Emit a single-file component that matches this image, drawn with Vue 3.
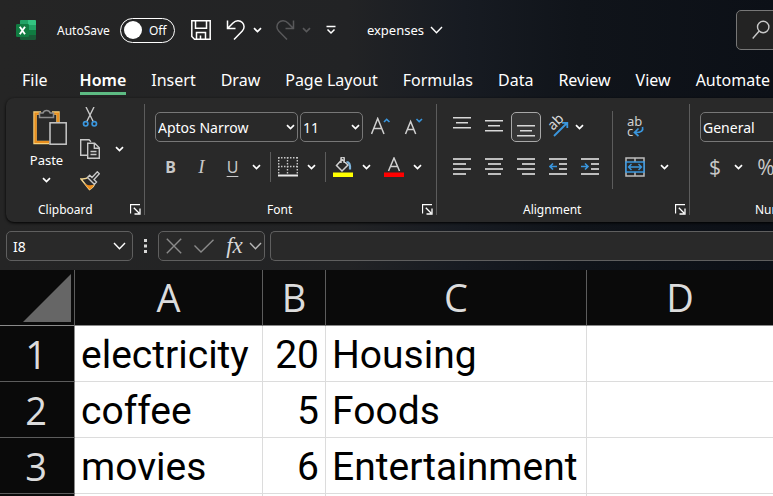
<script setup>
import { h, ref } from 'vue'

const Caret = () =>
  h('svg', { class: 'caret', width: 9, height: 6, viewBox: '0 0 9 6', fill: 'none', 'aria-hidden': 'true' }, [
    h('path', { d: 'M1 1.2 4.5 4.6 8 1.2', stroke: 'currentColor', 'stroke-width': 1.7 }),
  ])

const Chevron = () =>
  h('svg', { class: 'chevron', width: 13, height: 8, viewBox: '0 0 13 8', fill: 'none', 'aria-hidden': 'true' }, [
    h('path', { d: 'M1 1 6.500 6.800 12 1', stroke: 'currentColor', 'stroke-width': 1.4 }),
  ])

const Launcher = () =>
  h('svg', { width: 11, height: 11, viewBox: '0 0 11 11', fill: 'none', stroke: 'currentColor', 'aria-hidden': 'true' }, [
    h('path', { d: 'M.5 9.5V.5h9.5M3.8 3.8 9 9M4.5 10h5.5V4.5', 'stroke-width': 1.3 }),
  ])

const tabs = ['Home', 'Insert', 'Draw', 'Page Layout', 'Formulas', 'Data', 'Review', 'View', 'Automate']
const activeTab = ref('Home')
const autoSave = ref(false)
const cellName = ref('I8')
const formula = ref('')

const lines = {
  top: [[0, 1, 18], [3, 6, 12], [0, 11, 18]],
  middle: [[0, 4, 18], [3, 9, 12], [0, 14, 18]],
  bottom: [[0, 9, 18], [3, 14, 12], [0, 19, 18]],
  left: [[0, 1, 18], [0, 6, 13], [0, 11, 18], [0, 16, 13]],
  center: [[0, 1, 18], [3, 6, 13], [0, 11, 18], [3, 16, 13]],
  right: [[0, 1, 18], [5, 6, 13], [0, 11, 18], [5, 16, 13]],
}

const columns = ['A', 'B', 'C', 'D']
const rows = [
  ['electricity', 20, 'Housing', ''],
  ['coffee', 5, 'Foods', ''],
  ['movies', 6, 'Entertainment', ''],
]
</script>

<template>
  <div class="window">
    <header class="titlebar">
      <svg class="logo" width="20" height="20" viewBox="0 0 20 20" aria-hidden="true">
        <rect x="4" width="16" height="20" rx="1.2" fill="#185c37" />
        <path d="M5 0h7v5H4V1a1 1 0 0 1 1-1z" fill="#21a366" />
        <path d="M12 0h7a1 1 0 0 1 1 1v4h-8z" fill="#33c481" />
        <path d="M4 5h8v5H4z" fill="#107c41" />
        <path d="M12 5h8v5h-8z" fill="#21a366" />
        <path d="M12 10h8v5h-8z" fill="#107c41" />
        <rect y="4" width="13" height="13" rx="1.2" fill="#107c41" />
        <path d="M3.8 6.8 9 14.2M9 6.8 3.8 14.2" stroke="#fff" stroke-width="1.9" />
      </svg>

      <label class="autosave">
        <span>AutoSave</span>
        <input v-model="autoSave" type="checkbox" role="switch" class="hidden-input" />
        <span class="switch"><i class="knob"></i><span>{{ autoSave ? 'On' : 'Off' }}</span></span>
      </label>

      <div class="quick">
        <button aria-label="Save">
          <svg width="20" height="20" viewBox="0 0 20 20" fill="none" stroke="currentColor" stroke-width="1.5">
            <path d="M.8.8h18.4v18.4H3.5L.8 16.5zM4.5 1v7.2h11V1M5.500 19v-6.500h9V19M9.500 15.500v3.500" />
          </svg>
        </button>
        <button class="undo" aria-label="Undo">
          <svg width="20" height="20" viewBox="0 0 20 20" fill="none" stroke="currentColor" stroke-width="1.5">
            <path d="M1.500.5v8h8M1.800 8.200 7 3C9.800.2 14 .2 16.300 2.600c2.400 2.400 2.300 6 0 8.400L8 19.500" />
          </svg>
        </button>
        <button aria-label="Undo history"><Caret /></button>
        <button class="redo dim" aria-label="Redo">
          <svg width="20" height="20" viewBox="0 0 20 20" fill="none" stroke="currentColor" stroke-width="1.5">
            <path d="M18.500.5v8h-8M18.200 8.200 13 3C10.200.2 6 .2 3.700 2.600c-2.400 2.400-2.300 6 0 8.400L12 19.500" />
          </svg>
        </button>
        <button class="dim" aria-label="Redo history"><Caret /></button>
        <button class="customize" aria-label="Customize toolbar">
          <svg width="10" height="10" viewBox="0 0 10 10" fill="none" stroke="currentColor" stroke-width="1.5">
            <path d="M.5 1.500h9M1.500 4.500 5 8l3.500-3.500" />
          </svg>
        </button>
      </div>

      <button class="filename">expenses <Chevron /></button>

      <button class="search" aria-label="Search">
        <svg width="20" height="20" viewBox="0 0 20 20" fill="none" stroke="currentColor" stroke-width="1.400">
          <circle cx="13.200" cy="7" r="5.700" /><path d="M9.200 11 2.700 18.500" />
        </svg>
      </button>
    </header>

    <nav class="tabs">
      <button class="tab file">File</button>
      <button
        v-for="tab in tabs"
        :key="tab"
        class="tab"
        :class="{ active: tab === activeTab }"
        @click="activeTab = tab"
      >{{ tab }}</button>
    </nav>

    <section class="ribbon">
      <div class="group clipboard">
        <div class="body clip">
          <button class="paste">
            <svg width="34" height="38" viewBox="0 0 34 38" fill="none">
              <path d="M8 5H2v29.500h14M19 5h6v9" stroke="#f8d27c" stroke-width="3.400" />
              <path d="M8 5.500H2.500v28.500h14M19 5.500h6v8.500" stroke="#e88e1f" stroke-width="2.200" />
              <path d="M6.500 9.500V5h3.500a3.800 3.800 0 0 1 7.200 0h3.300v4.500z" stroke="#8d8d8d" stroke-width="1.500" fill="#292929" />
              <rect x="17" y="14.800" width="16.200" height="21.400" fill="#292929" stroke="#c8c8c8" stroke-width="1.500" />
            </svg>
            <span>Paste</span>
            <Caret />
          </button>
          <div class="clip-tools">
            <button aria-label="Cut">
              <svg width="20" height="20" viewBox="0 0 20 20" fill="none" stroke-width="1.400">
                <path d="M6 0l7.200 14.500M14 0 6.800 14.500" stroke="#c8c8c8" />
                <circle cx="5.700" cy="16.800" r="2.200" stroke="#3a96dd" stroke-width="1.700" />
                <circle cx="14.300" cy="16.800" r="2.200" stroke="#3a96dd" stroke-width="1.700" />
              </svg>
            </button>
            <button aria-label="Copy">
              <svg width="20" height="20" viewBox="0 0 20 20" fill="none" stroke="#c8c8c8" stroke-width="1.400">
                <path d="M7 16.300H.700V.700H9L11 2.700" />
                <path d="M7.700 4.200h7l4.600 4.600v10.500H7.700zM14.300 4.500v4.800h5M10.500 12.500h6M10.500 15.500h6" />
              </svg>
            </button>
            <button aria-label="Format Painter">
              <svg width="20" height="20" viewBox="0 0 20 20" fill="none">
                <path d="M1 8 9.500 18.500c3-1.500 5-4 5.500-7L9 5.800C7 7.800 4.500 8.300 1 8z" fill="#292929" stroke="#f3d58e" stroke-width="1.400" />
                <path d="M4 12.200 9.500 18.500c2-1 3.500-2.300 4.300-4.700-3 .8-6.500.8-9.800-1.600z" fill="#ef8d1c" />
                <path d="M7.500 6.500 9.700 4.300 12 6.500 17.300.8l2 2-5.300 5.700 2.500 2.600-2.200 2.200z" fill="#292929" stroke="#c8c8c8" stroke-width="1.400" />
              </svg>
            </button>
          </div>
          <button class="copy-menu" aria-label="Copy options"><Caret /></button>
        </div>
        <footer><span>Clipboard</span><button aria-label="Clipboard settings"><Launcher /></button></footer>
      </div>

      <div class="group font">
        <div class="body">
          <div class="row">
            <span class="combo family">
              <select aria-label="Font"><option>Aptos Narrow</option><option>Calibri</option></select><Caret />
            </span>
            <span class="combo size">
              <select aria-label="Font size"><option>11</option><option>12</option></select><Caret />
            </span>
            <button class="tool wide" aria-label="Increase font size">
              <svg width="20" height="20" viewBox="0 0 20 20" fill="none">
                <path d="M.5 17 6.700 1.500 13 17M2.800 11.500h7.800" stroke="#d0d0d0" stroke-width="1.500" />
                <path d="M13 5 15.700 2.300 18.500 5" stroke="#3a96dd" stroke-width="1.600" />
              </svg>
            </button>
            <button class="tool wide" aria-label="Decrease font size">
              <svg width="20" height="20" viewBox="0 0 20 20" fill="none">
                <path d="M2.500 17 7.600 4.500 12.700 17M4.500 12.500h6.300" stroke="#d0d0d0" stroke-width="1.500" />
                <path d="M13.500 2 16.200 4.700 19 2" stroke="#3a96dd" stroke-width="1.600" />
              </svg>
            </button>
          </div>
          <div class="row">
            <button class="tool letter bold">B</button>
            <button class="tool letter italic">I</button>
            <button class="tool letter underline">U</button>
            <button class="drop" aria-label="Underline options"><Caret /></button>
            <span class="divider"></span>
            <button class="tool" aria-label="Borders">
              <svg width="20" height="20" viewBox="0 0 20 20" fill="none" stroke="#c8c8c8">
                <path d="M0 .7h20M0 9.500h20" stroke-width="1.400" stroke-dasharray="1.500 1.500" />
                <path d="M.7 0v17M9.500 0v17M19.300 0v17" stroke-width="1.400" stroke-dasharray="1.500 1.500" />
                <path d="M0 18.500h20" stroke="#e8e8e8" stroke-width="2" />
              </svg>
            </button>
            <button class="drop" aria-label="Border options"><Caret /></button>
            <span class="divider"></span>
            <button class="tool" aria-label="Fill color">
              <svg width="20" height="20" viewBox="0 0 20 20" fill="none">
                <path d="M9 2.500 3.500 8.500 9 14 15 8zM8 6V1.500a1.600 1.600 0 0 1 3.200 0V6" stroke="#d0d0d0" stroke-width="1.500" />
                <path d="M13.500 5c2.500 0 4 2 3.500 7.500" stroke="#7db4dc" stroke-width="2.200" />
                <path d="M0 15.500h20v4.500H0z" fill="#ff0" />
              </svg>
            </button>
            <button class="drop" aria-label="Fill color options"><Caret /></button>
            <button class="tool fontcolor" aria-label="Font color">
              <svg width="20" height="20" viewBox="0 0 20 20" fill="none">
                <path d="M4.500 14 10 1l5.500 13M6.500 9.500h7" stroke="#d0d0d0" stroke-width="1.500" />
                <path d="M0 15.500h20v4.500H0z" fill="#f00" />
              </svg>
            </button>
            <button class="drop" aria-label="Font color options"><Caret /></button>
          </div>
        </div>
        <footer><span>Font</span><button aria-label="Font settings"><Launcher /></button></footer>
      </div>

      <div class="group alignment">
        <div class="body align">
          <div class="stack">
            <div class="row">
              <button v-for="k in ['top', 'middle', 'bottom']" :key="k" class="tool" :class="{ pressed: k === 'bottom' }" :aria-label="'Align ' + k">
                <svg width="18" height="20" viewBox="0 0 18 20">
                  <rect v-for="(l, i) in lines[k]" :key="i" :x="l[0]" :y="l[1] - 1" :width="l[2]" height="1.500" fill="#d8d8d8" />
                </svg>
              </button>
              <button class="tool" aria-label="Orientation">
                <svg class="spill" width="20" height="20" viewBox="0 0 20 20" fill="none">
                  <text transform="translate(5 14) rotate(-45)" font-size="14" fill="#d8d8d8">ab</text>
                  <path d="M6 19 19 6M14 5.800h5.300v5.300" stroke="#3a96dd" stroke-width="1.800" />
                </svg>
              </button>
              <button class="drop" aria-label="Orientation options"><Caret /></button>
            </div>
            <div class="row">
              <button v-for="k in ['left', 'center', 'right']" :key="k" class="tool" :aria-label="'Align ' + k">
                <svg width="18" height="18" viewBox="0 0 18 18">
                  <rect v-for="(l, i) in lines[k]" :key="i" :x="l[0]" :y="l[1] - 1" :width="l[2]" height="2" fill="#bdbdbd" />
                </svg>
              </button>
              <button class="tool" aria-label="Decrease indent">
                <svg width="18" height="18" viewBox="0 0 18 18" fill="none">
                  <path d="M0 1h18M10 6h8M10 11h8M0 16h18" stroke="#bdbdbd" stroke-width="2" />
                  <path d="M8 8.500H1M4 5.500l-3 3 3 3" stroke="#3a96dd" stroke-width="1.600" />
                </svg>
              </button>
              <button class="tool" aria-label="Increase indent">
                <svg width="18" height="18" viewBox="0 0 18 18" fill="none">
                  <path d="M0 1h18M10 6h8M10 11h8M0 16h18" stroke="#bdbdbd" stroke-width="2" />
                  <path d="M0 8.500h7M4 5.500l3 3-3 3" stroke="#3a96dd" stroke-width="1.600" />
                </svg>
              </button>
            </div>
          </div>
          <span class="divider tall"></span>
          <div class="stack">
            <div class="row">
              <button class="tool" aria-label="Wrap text">
                <svg class="spill" width="20" height="20" viewBox="0 0 20 20" fill="none">
                  <text x="2" y="9" font-size="13" fill="#d0d0d0">ab</text>
                  <text x="2" y="19" font-size="13" fill="#d0d0d0">c</text>
                  <path d="M17.500 10c1 3.500-1 5.500-7 5.500M13.500 11.500l-4 4 4 3.500" stroke="#3a96dd" stroke-width="1.700" />
                </svg>
              </button>
            </div>
            <div class="row">
              <button class="tool" aria-label="Merge and center">
                <svg width="20" height="20" viewBox="0 0 20 20" fill="none">
                  <path d="M1 1h18v18H1zM10 1v4M10 15v4" stroke="#bdbdbd" stroke-width="1.500" />
                  <path d="M1 5h18v10H1z" fill="#292929" stroke="#3a96dd" stroke-width="1.600" />
                  <path d="M3.500 10h13M6.500 7l-3 3 3 3M13.500 7l3 3-3 3" stroke="#3a96dd" stroke-width="1.400" />
                </svg>
              </button>
              <button class="drop merge" aria-label="Merge options"><Caret /></button>
            </div>
          </div>
        </div>
        <footer><span>Alignment</span><button aria-label="Alignment settings"><Launcher /></button></footer>
      </div>

      <div class="group number">
        <div class="body">
          <div class="row">
            <span class="combo format">
              <select aria-label="Number format"><option>General</option><option>Currency</option></select><Caret />
            </span>
          </div>
          <div class="row">
            <button class="tool symbol">$</button>
            <button class="drop currency" aria-label="Currency options"><Caret /></button>
            <button class="tool symbol">%</button>
          </div>
        </div>
        <footer><span>Number</span></footer>
      </div>
    </section>

    <section class="formulabar">
      <div class="field namebox">
        <input v-model="cellName" aria-label="Name box" />
        <button aria-label="Named ranges"><Chevron /></button>
      </div>
      <svg class="grip" width="3" height="14" viewBox="0 0 3 14" fill="#d8d8d8" aria-hidden="true">
        <path d="M0 0h3v3H0zM0 5.500h3v3H0zM0 11h3v3H0z" />
      </svg>
      <div class="field actions">
        <button class="muted" aria-label="Cancel">
          <svg width="16" height="16" viewBox="0 0 16 16" stroke="currentColor" stroke-width="1.400"><path d="M.8.8l14.400 14.400M15.200.8.8 15.200" /></svg>
        </button>
        <button class="muted" aria-label="Enter">
          <svg width="20" height="14" viewBox="0 0 20 14" fill="none" stroke="currentColor" stroke-width="1.400"><path d="M.5 6.500 7 13 19.500.7" /></svg>
        </button>
        <button class="fx" aria-label="Insert function">fx</button>
        <button class="soft" aria-label="Function list"><Chevron /></button>
      </div>
      <input v-model="formula" class="field formula" aria-label="Formula" />
    </section>

    <table class="sheet">
      <colgroup>
        <col class="c-head" /><col class="c-a" /><col class="c-b" /><col class="c-c" /><col />
      </colgroup>
      <thead>
        <tr>
          <th class="corner">
            <svg width="48" height="48" viewBox="0 0 48 48" aria-hidden="true"><path d="M48 0v48H0z" fill="#666" /></svg>
          </th>
          <th v-for="c in columns" :key="c" scope="col">{{ c }}</th>
        </tr>
      </thead>
      <tbody>
        <tr v-for="(row, r) in rows" :key="r">
          <th scope="row">{{ r + 1 }}</th>
          <td v-for="(value, c) in row" :key="c" :class="{ num: c === 1 }">{{ value }}</td>
        </tr>
        <tr>
          <th></th>
          <td v-for="c in columns" :key="c"></td>
        </tr>
      </tbody>
    </table>
  </div>
</template>

<style>
body {
  margin: 0;
  overflow: hidden;
  background: #fff;
}
</style>

<style scoped>
* {
  box-sizing: border-box;
}
.window {
  height: 100vh;
  overflow: hidden;
  color: #fff;
  font-family: "Noto Sans", "Open Sans", sans-serif;
  font-size: 13px;
  background: linear-gradient(90deg, #252525 0%, #222325 45%, #171b22 60%, #10141a 75%, #0c1017 100%);
}
button,
input,
select {
  margin: 0;
  padding: 0;
  border: 0;
  background: none;
  color: inherit;
  font: inherit;
  outline: none;
}
button {
  display: inline-flex;
  align-items: center;
  justify-content: center;
  flex: none;
}
svg {
  display: block;
  flex: none;
}

.titlebar {
  display: flex;
  align-items: center;
  height: 60px;
  padding-left: 16px;
}
.autosave {
  display: flex;
  align-items: center;
  gap: 10px;
  margin-left: 21px;
  font-size: 12px;
}
.hidden-input {
  display: none;
}
.switch {
  display: flex;
  align-items: center;
  gap: 7px;
  width: 55px;
  height: 25px;
  padding-left: 3px;
  border: 1px solid #fff;
  border-radius: 13px;
}
.knob {
  width: 18px;
  height: 18px;
  border-radius: 50%;
  background: #fff;
}
.quick {
  display: flex;
  align-items: center;
  margin-left: 16px;
}
.undo {
  margin-left: 15px;
  margin-right: 7px;
}
.redo {
  margin-left: 13px;
  margin-right: 7px;
}
.dim {
  color: #58585a;
}
.customize {
  margin-left: 15px;
}
.filename {
  gap: 6px;
  margin-left: 31px;
}
.search {
  width: 48px;
  height: 40px;
  margin-left: auto;
  margin-right: -11px;
  border: 1px solid #777;
  border-radius: 5px;
  background: #232323;
  color: #c8c8c8;
}

.tabs {
  display: flex;
  gap: 25px;
  height: 38px;
  padding-left: 22px;
  font-size: 16px;
}
.tab {
  height: 35px;
  padding-top: 8px;
  border-bottom: 3px solid transparent;
  white-space: nowrap;
}
.file {
  margin-right: 7px;
}
.active {
  font-weight: 600;
  border-bottom-color: #5dbb83;
}

.ribbon {
  display: flex;
  height: 124px;
  margin-left: 6px;
  border-radius: 8px 0 0 8px;
  background: #292929;
  box-shadow: 0 1px 3px #000;
  overflow: hidden;
}
.group {
  display: flex;
  flex-direction: column;
  flex: none;
  position: relative;
  padding-top: 14px;
}
.group:not(.number)::after {
  content: "";
  position: absolute;
  right: 0;
  top: 6px;
  bottom: 7px;
  width: 1px;
  background: #5c5c5c;
}
.group footer {
  display: grid;
  grid-template-columns: 1fr auto 1fr;
  align-items: center;
  height: 20px;
  padding-right: 4px;
  font-size: 12px;
}
.group footer span {
  grid-column: 2;
}
.group footer button {
  justify-self: end;
}
.clipboard {
  width: 139px;
}
.group.clipboard footer {
  grid-template-columns: 32px auto 1fr;
}
.font {
  width: 292px;
}
.group.font footer {
  grid-template-columns: 122px auto 1fr;
}
.group.alignment footer {
  grid-template-columns: 86px auto 1fr;
}
.group.number footer {
  grid-template-columns: 65px auto 1fr;
}
.alignment {
  width: 253px;
}
.number {
  width: 180px;
}
.body {
  display: flex;
  flex-direction: column;
  gap: 10px;
  height: 87px;
  padding-left: 10px;
}
.row {
  display: flex;
  align-items: center;
  height: 30px;
}
.clip {
  flex-direction: row;
  gap: 15px;
  padding-left: 22px;
}
.paste {
  flex-direction: column;
  justify-content: flex-start;
  width: 37px;
  height: 76px;
  margin-top: -4px;
}
.paste svg:first-child {
  margin-left: 7px;
}
.paste span {
  margin-top: 5px;
  margin-bottom: 8px;
  line-height: 18px;
}
.clip-tools {
  display: flex;
  flex-direction: column;
  gap: 12px;
  margin-top: -5px;
}
.copy-menu {
  height: 74px;
}

.combo {
  display: grid;
  align-items: center;
  height: 30px;
  border: 1px solid #777;
  border-radius: 5px;
  font-size: 14px;
}
.combo > * {
  grid-area: 1 / 1;
}
.combo select {
  appearance: none;
  width: 100%;
  height: 28px;
  padding-left: 2px;
}
.combo option {
  background: #292929;
}
.combo .caret {
  justify-self: end;
  margin-right: 2px;
  pointer-events: none;
}
.family {
  width: 143px;
}
.size {
  width: 63px;
  margin-left: 2px;
  margin-right: 2px;
}
.format {
  width: 160px;
}
.tool {
  width: 30px;
  height: 30px;
}
.wide {
  width: 32px;
}
.pressed {
  border: 1px solid #a8a8a8;
  border-radius: 5px;
  background: #363636;
}
.letter {
  width: 31px;
  color: #c8c8c8;
  font-size: 16px;
}
.bold {
  font-weight: 700;
}
.italic {
  font-family: "Liberation Serif", serif;
  font-style: italic;
  font-size: 19px;
}
.underline {
  text-decoration: underline;
  text-underline-offset: 3px;
}
.drop {
  width: 17px;
  height: 30px;
}
.divider {
  width: 1px;
  height: 30px;
  margin: 0 2px 0 5px;
  background: #5c5c5c;
}
.fontcolor {
  margin-left: 4px;
}

.align {
  flex-direction: row;
  gap: 0;
}
.stack {
  display: flex;
  flex-direction: column;
  gap: 10px;
}
.stack .row {
  gap: 2px;
}
.align .stack .drop {
  margin-left: -4px;
}
.tall {
  height: 78px;
  margin: -1px 7px 0 7px;
}
.align .stack .merge {
  margin-left: 4px;
}
.spill {
  overflow: visible;
}
.symbol {
  color: #c8c8c8;
  font-family: "Open Sans", sans-serif;
  font-size: 21px;
}
.currency {
  margin-right: 4px;
}

.formulabar {
  display: flex;
  align-items: center;
  height: 48px;
  padding-left: 6px;
}
.field {
  display: flex;
  align-items: center;
  height: 30px;
  border: 1px solid #5f5f5f;
  border-radius: 5px;
  background: #292929;
}
.namebox {
  width: 127px;
  padding: 0 6px;
  font-size: 14px;
}
.namebox input {
  flex: 1;
  min-width: 0;
}
.grip {
  margin: 0 11px;
}
.actions {
  gap: 12px;
  width: 107px;
  padding-left: 7px;
}
.muted {
  color: #8a8a8a;
}
.soft {
  color: #b8b8b8;
}
.fx {
  width: 17px;
  color: #d8d8d8;
  font-family: "Liberation Serif", serif;
  font-style: italic;
  font-size: 23px;
  line-height: 26px;
}
.actions .soft {
  margin-left: -6px;
}
.formula {
  flex: 1;
  min-width: 0;
  margin-left: 5px;
  padding: 0 8px;
  border-right: 0;
  border-radius: 5px 0 0 5px;
}

.sheet {
  width: 100%;
  table-layout: fixed;
  border-collapse: separate;
  border-spacing: 0;
  background: #fff;
  color: #000;
  font-family: Roboto, sans-serif;
  font-size: 39px;
}
.c-head {
  width: 75px;
}
.c-a {
  width: 188px;
}
.c-b {
  width: 63px;
}
.c-c {
  width: 261px;
}
.sheet th,
.sheet td {
  height: 56px;
  padding: 4px 6px 0;
  border-right: 1px solid #dcdcdc;
  border-bottom: 1px solid #dcdcdc;
  line-height: 51px;
  text-align: left;
  white-space: nowrap;
}
.sheet th {
  padding: 0;
  border-color: #5c5c5c;
  background: #0a0a0a;
  color: #dcdcdc;
  font-family: "Open Sans", sans-serif;
  font-size: 38px;
  font-weight: 400;
  line-height: 55px;
  text-align: center;
}
.sheet thead th {
  border-bottom-color: #8a8a8a;
}
.sheet tbody th {
  padding-top: 2px;
  padding-right: 2px;
  border-right-color: #8a8a8a;
  line-height: 53px;
}
.sheet th:last-child,
.sheet td:last-child {
  border-right: 0;
}
.sheet .num {
  text-align: right;
}
.corner svg {
  margin: 4px 3px 3px auto;
}
</style>
